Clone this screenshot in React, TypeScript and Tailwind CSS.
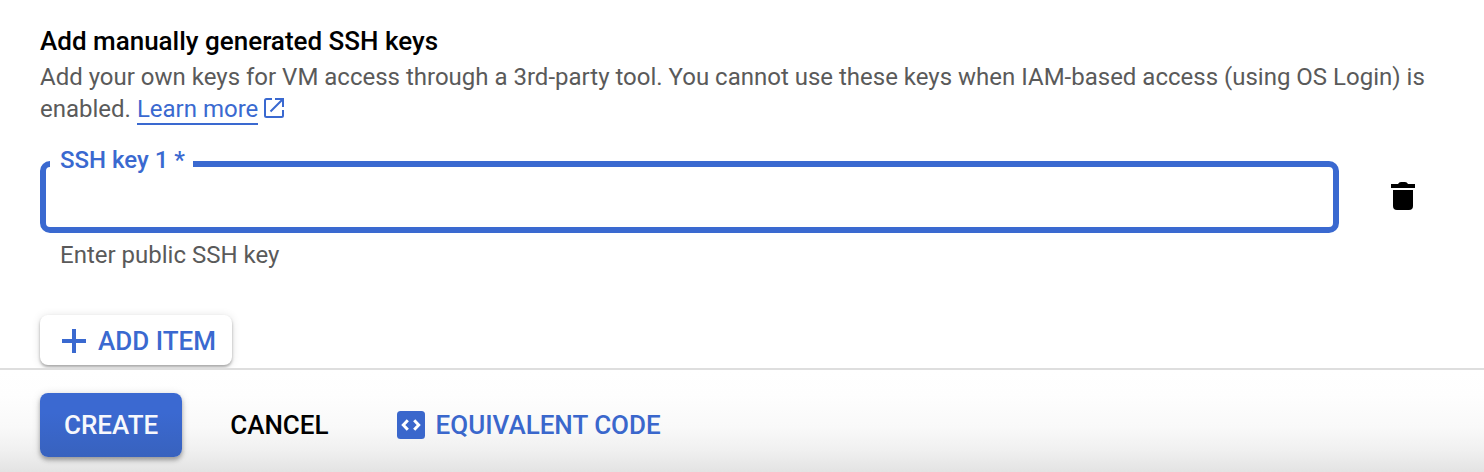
import React from "react";

function OpenIcon() {
  return (
    <svg viewBox="0 0 20 20" className="ml-1.5 inline h-5 w-5 align-[-1px]" fill="none" stroke="#3a69d0" strokeWidth="2" aria-hidden="true">
      <path d="M8 1H2.500Q1 1 1 2.500V17.500Q1 19 2.500 19H17.500Q19 19 19 17.500V12M11 1H19V9M19 1L6.500 13.500" />
    </svg>
  );
}

function TrashIcon() {
  return (
    <svg viewBox="0 0 24 28" className="h-7 w-6" fill="#000" aria-hidden="true">
      <path d="M0 2H7Q8 0 10 0H14Q16 0 17 2H24V6H0ZM2 8H22V24Q22 28 18 28H6Q2 28 2 24Z" />
    </svg>
  );
}

function PlusIcon() {
  return (
    <svg viewBox="0 0 24 24" className="h-6 w-6" fill="none" stroke="currentColor" strokeWidth="4" aria-hidden="true">
      <path d="M12 0V24M0 12H24" />
    </svg>
  );
}

function CodeIcon() {
  return (
    <svg viewBox="0 0 28 28" className="h-7 w-7" aria-hidden="true">
      <rect width="28" height="28" rx="3.500" fill="#3a67cc" />
      <path d="M10.800 9.200L6.300 14L10.800 18.800M17.200 9.200L21.700 14L17.200 18.800" fill="none" stroke="#fff" strokeWidth="3" />
    </svg>
  );
}

export default function App() {
  return (
    <div className="min-h-screen bg-white font-[Roboto,sans-serif] text-2xl text-black">
      <main className="px-10 pt-6">
        <h2 className="text-[26px] leading-[34px] font-medium">Add manually generated SSH keys</h2>
        <p className="mt-[3px] leading-8 text-[#5a5a5a]">
          Add your own keys for VM access through a 3rd-party tool. You cannot use these keys when IAM-based access (using OS Login) is enabled.{" "}
          <a href="#learn" className="text-[#3a69d0]">
            <span className="border-b-2 border-[#3a69d0]">Learn more</span>
            <OpenIcon />
          </a>
        </p>
        <div className="mt-[21px] flex items-start">
          <div className="flex-1">
            <fieldset className="rounded-[10px] border-[6px] border-[#3a69d0] px-1">
              <legend className="pr-2 pb-2 pl-2.5 leading-7 font-medium text-[#3a69d0]">
                <label htmlFor="key">SSH key 1 *</label>
              </legend>
              <input id="key" className="block h-[45px] w-full px-2.5 outline-none" aria-describedby="hint" />
            </fieldset>
            <p id="hint" className="mt-2 px-5 leading-7 text-[#5a5a5a]">Enter public SSH key</p>
          </div>
          <button aria-label="Delete SSH key 1" className="mt-[30px] mr-[21px] ml-11 flex h-10 w-10 items-center justify-center">
            <TrashIcon />
          </button>
        </div>
        <button className="mt-[46px] flex h-[50px] items-center gap-3 rounded-lg pt-0.5 pr-4 pl-[22px] text-[26px] font-medium text-[#3a69d0] shadow-[0_2px_3px_rgba(0,0,0,0.3),0_1px_10px_rgba(0,0,0,0.12)]">
          <PlusIcon />
          ADD ITEM
        </button>
      </main>
      <footer className="relative mt-[3px] flex items-start border-t-2 border-[#dedede] bg-[linear-gradient(#fff_0%,#fefefe_25%,#f9f9f9_56%,#f0f0f0_79%,#e3e3e3_100%)] px-10 pt-[23px] pb-[15px] text-[26px] font-medium">
        <button className="h-16 rounded-lg bg-linear-to-b from-[#3b69d1] from-30% to-[#3862be] px-6 text-[#f7f8fc] shadow-[0_3px_4px_rgba(0,0,0,0.3),0_1px_10px_rgba(0,0,0,0.12)]">CREATE</button>
        <button className="ml-12 h-16">CANCEL</button>
        <button className="ml-[68px] flex h-16 items-center gap-[11px] text-[#3a67cc]">
          <CodeIcon />
          EQUIVALENT CODE
        </button>
      </footer>
    </div>
  );
}
